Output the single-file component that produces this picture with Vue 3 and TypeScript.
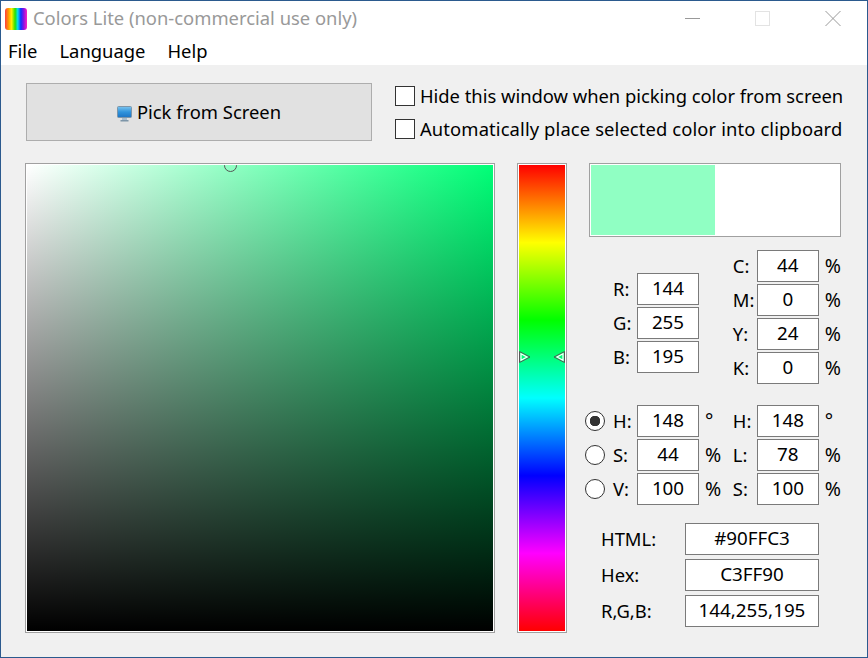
<script setup lang="ts">
interface Field {
  label: string
  value: string
  unit?: string
  radio?: boolean
  checked?: boolean
}

const menus: string[] = ['File', 'Language', 'Help']
const options: string[] = [
  'Hide this window when picking color from screen',
  'Automatically place selected color into clipboard'
]
const rgb: Field[] = [
  { label: 'R:', value: '144' },
  { label: 'G:', value: '255' },
  { label: 'B:', value: '195' }
]
const cmyk: Field[] = [
  { label: 'C:', value: '44', unit: '%' },
  { label: 'M:', value: '0', unit: '%' },
  { label: 'Y:', value: '24', unit: '%' },
  { label: 'K:', value: '0', unit: '%' }
]
const hsv: Field[] = [
  { label: 'H:', value: '148', unit: '°', radio: true, checked: true },
  { label: 'S:', value: '44', unit: '%', radio: true },
  { label: 'V:', value: '100', unit: '%', radio: true }
]
const hsl: Field[] = [
  { label: 'H:', value: '148', unit: '°' },
  { label: 'L:', value: '78', unit: '%' },
  { label: 'S:', value: '100', unit: '%' }
]
const codes: Field[] = [
  { label: 'HTML:', value: '#90FFC3' },
  { label: 'Hex:', value: 'C3FF90' },
  { label: 'R,G,B:', value: '144,255,195' }
]
</script>

<template>
  <div class="window">
    <header class="titlebar">
      <span class="app-icon"></span>
      <span class="title">Colors Lite (non-commercial use only)</span>
      <div class="controls">
        <svg width="16" height="16" viewBox="0 0 16 16" class="ctl min"><path d="M0 8.500H15" stroke="#999" fill="none" /></svg>
        <svg width="16" height="16" viewBox="0 0 16 16" class="ctl max"><rect x="0.500" y="1.500" width="14" height="14" stroke="#e3e3e3" fill="none" /></svg>
        <svg width="16" height="16" viewBox="0 0 16 16" class="ctl close"><path d="M0.500 1L15.500 16M15.500 1L0.500 16" stroke="#999" fill="none" /></svg>
      </div>
    </header>
    <nav class="menubar">
      <span v-for="m in menus" :key="m" class="menu">{{ m }}</span>
    </nav>
    <main class="content">
      <section class="top">
        <div class="pick">
          <svg class="monitor" width="16" height="16" viewBox="0 0 16 16">
            <defs>
              <linearGradient id="scr" x1="0" y1="0" x2="0" y2="1">
                <stop offset="0" stop-color="#7cc4ee" />
                <stop offset="0.5" stop-color="#2f93dc" />
                <stop offset="1" stop-color="#1d74c4" />
              </linearGradient>
            </defs>
            <rect x="0.500" y="0.500" width="14" height="11" rx="1" fill="url(#scr)" stroke="#7d95a8" />
            <rect x="5" y="12" width="5" height="2" fill="#a9bccb" />
            <rect x="3.500" y="14" width="8" height="1.500" fill="#7d95a8" />
          </svg>
          <span class="lift">Pick from Screen</span>
        </div>
        <div class="options">
          <label v-for="o in options" :key="o" class="option">
            <span class="box"></span>
            <span class="lift">{{ o }}</span>
          </label>
        </div>
      </section>
      <section class="workspace">
        <div class="sv">
          <div class="sv-fill">
            <span class="cursor"></span>
          </div>
        </div>
        <div class="hue">
          <div class="hue-fill">
            <svg class="mark mark-l" width="12" height="12" viewBox="0 0 12 12">
              <path d="M0.500 0.500L11 6L0.500 11.500Z" fill="none" stroke="#555" />
              <path d="M2 2.800L8 6L2 9.200Z" fill="none" stroke="#fff" stroke-width="1.200" />
            </svg>
            <svg class="mark mark-r" width="12" height="12" viewBox="0 0 12 12">
              <path d="M11.500 0.500L1 6L11.500 11.500Z" fill="none" stroke="#555" />
              <path d="M10 2.800L4 6L10 9.200Z" fill="none" stroke="#fff" stroke-width="1.200" />
            </svg>
          </div>
        </div>
        <div class="side">
          <div class="preview"><div class="swatch"></div></div>
          <div class="pair first">
            <div class="stack rgb">
              <div v-for="f in rgb" :key="f.label" class="field">
                <span class="lab lift">{{ f.label }}</span>
                <span class="val">{{ f.value }}</span>
              </div>
            </div>
            <div class="stack">
              <div v-for="f in cmyk" :key="f.label" class="field">
                <span class="lab lift">{{ f.label }}</span>
                <span class="val">{{ f.value }}</span>
                <span class="unit lift">{{ f.unit }}</span>
              </div>
            </div>
          </div>
          <div class="pair second">
            <div class="stack left">
              <div v-for="f in hsv" :key="f.label" class="field">
                <span class="radio" :class="{ on: f.checked }"></span>
                <span class="lab lift">{{ f.label }}</span>
                <span class="val">{{ f.value }}</span>
                <span class="unit lift">{{ f.unit }}</span>
              </div>
            </div>
            <div class="stack">
              <div v-for="f in hsl" :key="f.label" class="field">
                <span class="lab lift">{{ f.label }}</span>
                <span class="val">{{ f.value }}</span>
                <span class="unit lift">{{ f.unit }}</span>
              </div>
            </div>
          </div>
          <div class="codes">
            <div v-for="f in codes" :key="f.label" class="code">
              <span class="code-lab lift">{{ f.label }}</span>
              <span class="val wide">{{ f.value }}</span>
            </div>
          </div>
        </div>
      </section>
    </main>
  </div>
</template>

<style scoped>
.window {
  width: 868px;
  height: 658px;
  box-sizing: border-box;
  border: 1px solid #2b5a8e;
  background: #f0f0f0;
  display: flex;
  flex-direction: column;
  font-family: "Noto Sans", "Open Sans", sans-serif;
  font-size: 18.4px;
  color: #000;
  overflow: hidden;
}
.lift {
  padding-bottom: 2px;
}
.titlebar {
  height: 34px;
  background: #fff;
  display: flex;
  align-items: center;
  padding-left: 4px;
}
.app-icon {
  width: 22px;
  height: 22px;
  margin-top: 2px;
  border-radius: 3px;
  background: linear-gradient(to right, #ff3d3d, #ff9a00 16%, #fff000 30%, #25e000 46%, #00e0f0 58%, #1030ff 72%, #9010e0 86%, #ff20c0);
}
.title {
  margin-left: 6px;
  padding-bottom: 2px;
  color: #999;
  white-space: nowrap;
}
.controls {
  margin-left: auto;
  display: flex;
  gap: 54px;
  padding-right: 26px;
}
.ctl { display: block; }
.menubar {
  height: 30px;
  box-sizing: border-box;
  background: #fff;
  display: flex;
  align-items: center;
  padding-left: 7px;
  gap: 22px;
}
.content {
  flex: 1;
  padding: 18px 0 0 25px;
}
.top {
  display: flex;
}
.pick {
  width: 346px;
  height: 58px;
  box-sizing: border-box;
  border: 1px solid #adadad;
  background: #e1e1e1;
  display: flex;
  align-items: center;
  justify-content: center;
  gap: 4px;
}
.monitor { margin-top: 3px; }
.options {
  margin-left: 23px;
  padding-top: 3px;
  display: flex;
  flex-direction: column;
  gap: 13px;
}
.option {
  height: 20px;
  display: flex;
  align-items: center;
  gap: 5px;
  white-space: nowrap;
}
.option:first-child {
  letter-spacing: -0.02px;
}
.option:last-child {
  letter-spacing: 0.11px;
}
.box {
  width: 20px;
  height: 20px;
  box-sizing: border-box;
  border: 1px solid #333;
  background: #fff;
}
.workspace {
  display: flex;
  margin-top: 22px;
  margin-left: -1px;
}
.sv {
  width: 470px;
  height: 470px;
  box-sizing: border-box;
  border: 1px solid #a0a0a0;
  padding: 1px;
  background: #fff;
}
.sv-fill {
  position: relative;
  width: 100%;
  height: 100%;
  overflow: hidden;
  background:
    linear-gradient(to top, #000, rgba(0, 0, 0, 0)),
    linear-gradient(to right, #fff, #00ff77);
}
.cursor {
  position: absolute;
  left: 197px;
  top: -6px;
  width: 13px;
  height: 13px;
  box-sizing: border-box;
  border: 1px solid #555;
  border-radius: 50%;
}
.hue {
  width: 50px;
  height: 470px;
  margin-left: 22px;
  box-sizing: border-box;
  border: 1px solid #a0a0a0;
  padding: 1px;
  background: #fff;
}
.hue-fill {
  position: relative;
  width: 100%;
  height: 100%;
  background: linear-gradient(to bottom, #f00, #ff0 16.667%, #0f0 33.333%, #0ff 50%, #00f 66.667%, #f0f 83.333%, #f00);
}
.mark {
  position: absolute;
  top: 186px;
  display: block;
}
.mark-l { left: 0; }
.mark-r { right: 0; }
.side {
  width: 256px;
  margin-left: 18px;
  display: flex;
  flex-direction: column;
}
.preview {
  width: 252px;
  height: 74px;
  margin-left: 4px;
  box-sizing: border-box;
  border: 1px solid #a0a0a0;
  padding: 1px;
  background: #fff;
}
.swatch {
  width: 124px;
  height: 100%;
  background: #90ffc3;
}
.pair {
  display: flex;
}
.first { margin-top: 13px; }
.second { margin-top: 21px; }
.stack {
  display: flex;
  flex-direction: column;
  gap: 2px;
}
.rgb {
  width: 120px;
  margin-left: 28px;
  margin-top: 23px;
}
.left {
  width: 148px;
}
.field {
  height: 32px;
  display: flex;
  align-items: center;
}
.radio {
  width: 20px;
  height: 20px;
  margin-right: 8px;
  box-sizing: border-box;
  border: 1px solid #333;
  border-radius: 50%;
  background: #fff;
}
.radio.on {
  background: radial-gradient(circle, #333 0, #333 5px, #fff 5.500px);
}
.lab {
  width: 24px;
  white-space: nowrap;
}
.val {
  width: 62px;
  height: 32px;
  box-sizing: border-box;
  border: 1px solid #7a7a7a;
  padding-bottom: 2px;
  background: #fff;
  display: flex;
  align-items: center;
  justify-content: center;
  font-size: 18.8px;
}
.unit {
  margin-left: 6px;
  font-size: 19.500px;
}
.codes {
  margin-top: 18px;
  margin-left: 16px;
  display: flex;
  flex-direction: column;
  gap: 4px;
}
.code {
  height: 32px;
  display: flex;
  align-items: center;
}
.code-lab {
  width: 84px;
}
.wide {
  width: 134px;
}
</style>

<style>
html, body { background: #f0f0f0; }
</style>
